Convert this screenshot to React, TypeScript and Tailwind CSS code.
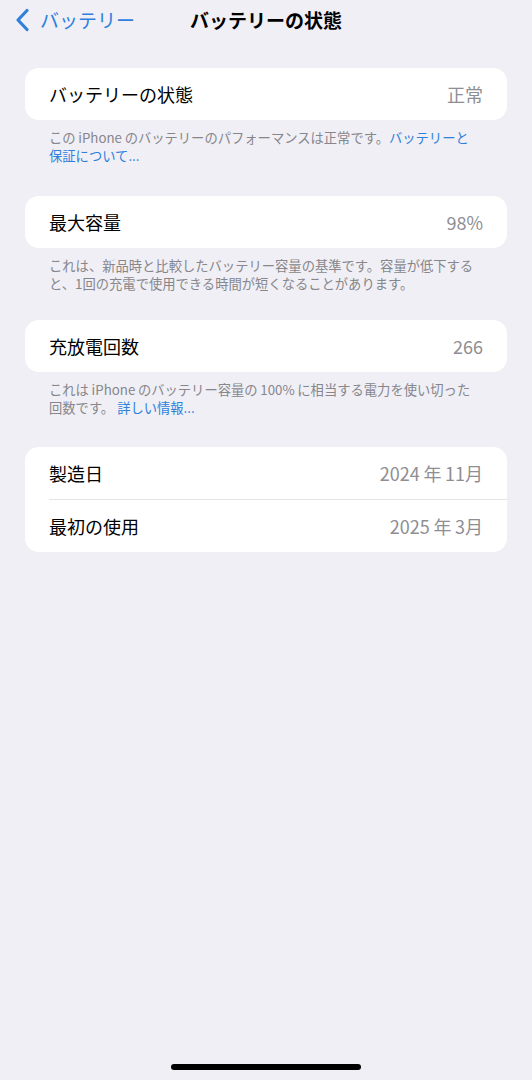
import React from 'react';

const font = { fontFamily: '"Noto Sans CJK JP", "Noto Sans", sans-serif' };

type Row = { label: string; value: string };

const Card = ({ rows }: { rows: Row[] }) => (
  <div className="mx-[25px] rounded-[14px] bg-white">
    {rows.map((row, i) => (
      <div key={row.label} className="pl-[24px]">
        {i > 0 && <div className="h-px bg-[#e3e3e8]" />}
        <div className="flex h-[52px] items-center justify-between pr-[24px]">
          <span className="text-[18px] text-black">{row.label}</span>
          <span className="text-[18px] text-[#8e8e93]">{row.value}</span>
        </div>
      </div>
    ))}
  </div>
);

const Note = ({ children, className }: { children: React.ReactNode; className: string }) => (
  <p className={`mx-[49px] mt-[9px] whitespace-nowrap text-[13.3px] leading-[18px] text-[#86868b] ${className}`}>{children}</p>
);

const Link = ({ children }: { children: React.ReactNode }) => (
  <span className="text-[#2f7fdc]">{children}</span>
);

export default function App() {
  return (
    <div style={font} className="relative flex h-[1080px] w-[532px] flex-col bg-[#f0eff5]">
      {/* navigation bar */}
      <div className="relative flex h-[40px] items-center">
        <div className="flex items-center pl-[14px] text-[#2f7fdc]">
          <svg width="18" height="24" viewBox="0 0 18 24" fill="none">
            <path d="M13 2.5 L4 12 L13 21.5" stroke="#2f7fdc" strokeWidth="3.2" strokeLinecap="round" strokeLinejoin="round" />
          </svg>
          <span className="ml-[8px] text-[19px]">バッテリー</span>
        </div>
        <span className="absolute left-1/2 -translate-x-1/2 text-[19px] font-bold text-black">バッテリーの状態</span>
      </div>

      <div className="mt-[28px]">
        <Card rows={[{ label: 'バッテリーの状態', value: '正常' }]} />
        <Note className="mb-[31px]">
          この{'\u2009'}iPhone{'\u2009'}のバッテリーのパフォーマンスは正常です。<Link>バッテリーと</Link>
          <br />
          <Link>保証について...</Link>
        </Note>

        <Card rows={[{ label: '最大容量', value: '98%' }]} />
        <Note className="mb-[27px]">
          これは、新品時と比較したバッテリー容量の基準です。容量が低下する
          <br />
          と、1回の充電で使用できる時間が短くなることがあります。
        </Note>

        <Card rows={[{ label: '充放電回数', value: '266' }]} />
        <Note className="mb-[30px]">
          これは{'\u2009'}iPhone{'\u2009'}のバッテリー容量の{'\u2009'}100%{'\u2009'}に相当する電力を使い切った
          <br />
          回数です。 <Link>詳しい情報...</Link>
        </Note>

        <Card
          rows={[
            { label: '製造日', value: '2024\u2009年\u200911月' },
            { label: '最初の使用', value: '2025\u2009年\u20093月' },
          ]}
        />
      </div>

      {/* home indicator */}
      <div className="mt-auto mb-[10px] flex justify-center">
        <div className="h-[6px] w-[190px] rounded-full bg-black" />
      </div>
    </div>
  );
}
